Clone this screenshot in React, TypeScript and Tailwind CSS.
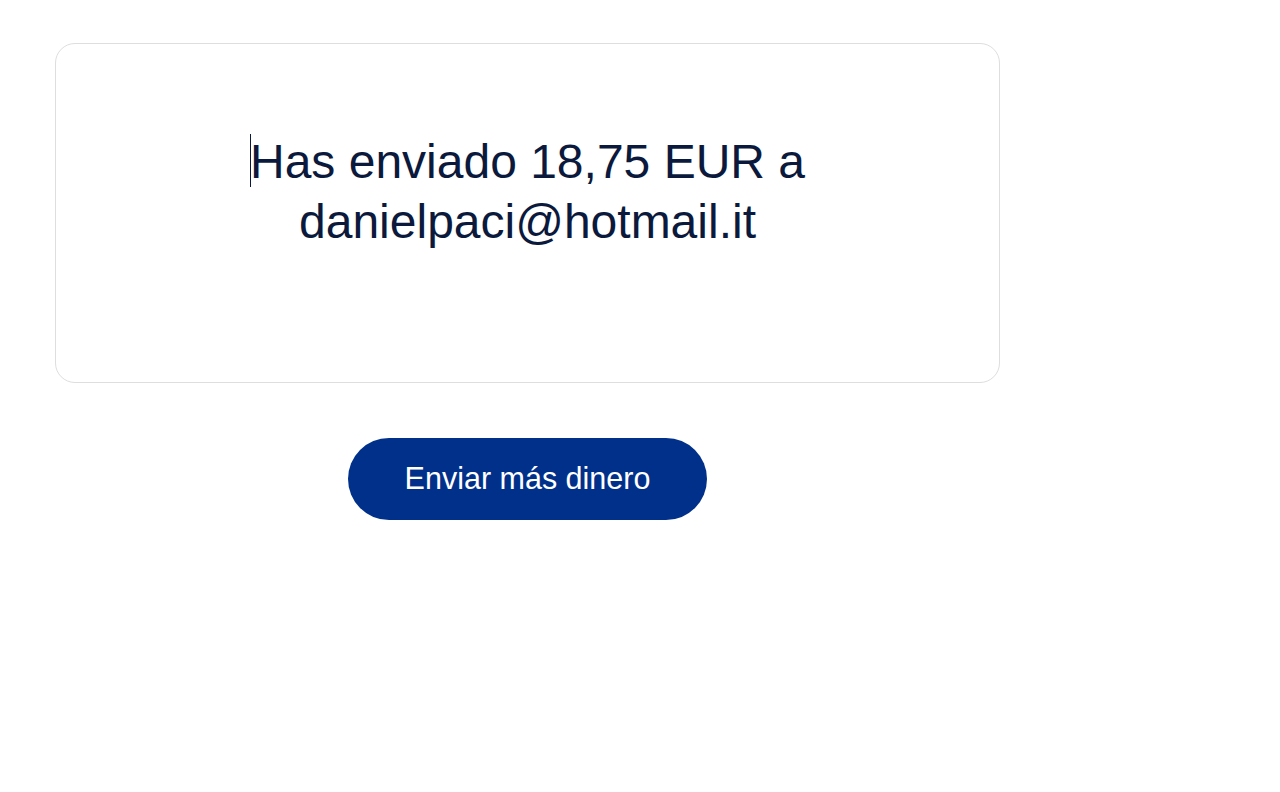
export default function App() {
  return (
    <div className="min-h-[792px] bg-white px-[55px] pt-[43px] font-['Liberation_Sans',Arial,sans-serif]">
      <div className="w-[945px]">
        {/* Tarjeta de confirmación */}
        <div className="h-[340px] rounded-[20px] border border-[#dedede] px-8 pt-[88px]">
          <p className="text-center text-[48px] leading-[60px] text-[#0b1a3c]">
            <span className="relative">
              <span className="absolute left-0 -top-px h-[53px] w-px bg-[#0b1a3c]" />
              Has enviado 18,75 EUR a
            </span>
            <br />
            danielpaci@hotmail.it
          </p>
        </div>

        {/* CTA */}
        <div className="mt-[55px] flex justify-center">
          <button className="h-[82px] w-[359px] rounded-full bg-[#00308a] text-[30.5px] text-white">
            Enviar más dinero
          </button>
        </div>
      </div>
    </div>
  )
}
